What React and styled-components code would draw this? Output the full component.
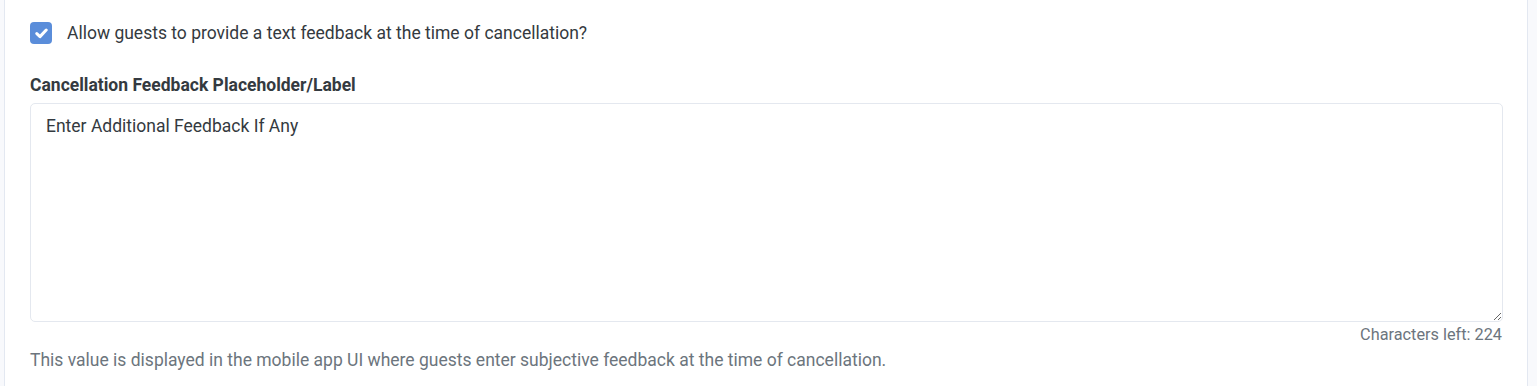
import React, { useState } from 'react';
import styled, { createGlobalStyle } from 'styled-components';

const GlobalStyle = createGlobalStyle`
  html, body {
    margin: 0;
    padding: 0;
    background: #f8f9fc;
    font-family: Roboto, "Liberation Sans", sans-serif;
  }
`;

const Page = styled.div`
  height: 386px;
  padding: 0 9px 0 4px;
  box-sizing: border-box;
`;

const Panel = styled.div`
  height: 100%;
  background: #fff;
  border-left: 1px solid #e3e8f1;
  border-right: 1px solid #e3e8f1;
  padding: 22px 25px 0 25px;
  box-sizing: border-box;
`;

const CheckRow = styled.label`
  display: flex;
  align-items: center;
  gap: 15px;
  height: 22px;
  font-size: 17.5px;
  color: #343a40;
  cursor: pointer;
`;

const Box = styled.span`
  width: 22px;
  height: 22px;
  border-radius: 4px;
  background: ${p => (p.checked ? '#5a8dda' : '#fff')};
  border: ${p => (p.checked ? 'none' : '1px solid #c8ced8')};
  display: flex;
  align-items: center;
  justify-content: center;
  flex-shrink: 0;
`;

const FieldLabel = styled.div`
  margin-top: 31px;
  font-size: 17.5px;
  font-weight: 700;
  color: #343a40;
  line-height: 20px;
`;

const Area = styled.textarea`
  display: block;
  margin-top: 8px;
  width: 1473px;
  height: 219px;
  box-sizing: border-box;
  border: 1px solid #e4e8ef;
  border-radius: 5px;
  padding: 11px 15px;
  font-family: Roboto, "Liberation Sans", sans-serif;
  font-size: 17.5px;
  line-height: 22px;
  color: #343a40;
  resize: vertical;
  outline: none;
`;

const Counter = styled.div`
  width: 1472px;
  text-align: right;
  font-size: 16.3px;
  color: #6c757d;
  margin-top: 3px;
  line-height: 20px;
`;

const Help = styled.div`
  font-size: 17.5px;
  color: #6c757d;
  margin-top: 5px;
  line-height: 20px;
`;

export default function App() {
  const [checked, setChecked] = useState(true);
  const [value, setValue] = useState('Enter Additional Feedback If Any');
  return (
    <>
      <GlobalStyle />
      <Page>
        <Panel>
          <CheckRow onClick={() => setChecked(!checked)}>
            <Box checked={checked}>
              {checked && (
                <svg width="13" height="11" viewBox="0 0 13 11">
                  <path d="M1.8 5.6 L5 8.6 L11.2 2" fill="none" stroke="#fff" strokeWidth="3" strokeLinecap="round" strokeLinejoin="round" />
                </svg>
              )}
            </Box>
            Allow guests to provide a text feedback at the time of cancellation?
          </CheckRow>
          <FieldLabel>Cancellation Feedback Placeholder/Label</FieldLabel>
          <Area value={value} maxLength={256} onChange={e => setValue(e.target.value)} />
          <Counter>Characters left: {256 - value.length}</Counter>
          <Help>This value is displayed in the mobile app UI where guests enter subjective feedback at the time of cancellation.</Help>
        </Panel>
      </Page>
    </>
  );
}
